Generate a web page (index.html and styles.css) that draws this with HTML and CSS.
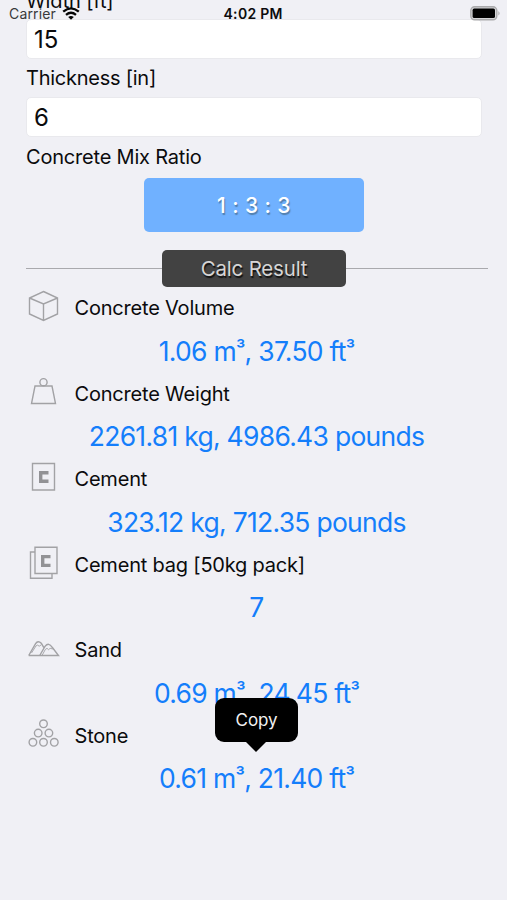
FILE: index.html
```html
<!DOCTYPE html>
<html lang="en">
<head>
<meta charset="utf-8">
<title>Concrete Calculator</title>
<link rel="stylesheet" href="styles.css">
</head>
<body>
<header class="status">
  <div class="network"><span class="carrier">Carrier</span>
    <svg class="wifi" width="18" height="13" viewBox="0 0 18 13" fill="none" stroke="#050505" stroke-width="2.3"><path d="M1.2 4.7Q9-2 16.8 4.7M4 7.8Q9 3.8 14 7.8"/><path d="M6.2 9.9Q9 7.9 11.8 9.9L9 12.8Z" fill="#050505" stroke="none"/></svg>
  </div>
  <span class="time">4:02 PM</span>
  <svg class="battery" width="31" height="15" viewBox="0 0 31 15"><rect x=".8" y=".8" width="26" height="13" rx="3.8" fill="#d5d5d7" stroke="#aaaaac" stroke-width="1.4"/><rect x="2.6" y="2.6" width="22.4" height="9.4" rx="1.6" fill="#000"/><path d="M28.4 5Q30.8 7.3 28.4 9.6Z" fill="#aaaaac"/></svg>
</header>
<main class="page">
  <label class="field-label first">Width [ft]</label>
  <div class="field">15</div>
  <label class="field-label">Thickness [in]</label>
  <div class="field">6</div>
  <label class="field-label ratio-label">Concrete Mix Ratio</label>
  <button class="ratio">1 : 3 : 3</button>
  <div class="divider"><span class="divider-title">Calc Result</span></div>
  <section class="results">
    <div class="row"><svg class="icon" viewBox="0 0 34 34"><path d="M17 2.5 31 9v16L17 31.5 3 25V9ZM3 9l14 6 14-6M17 15v16.5"/></svg><span class="name">Concrete Volume</span></div>
    <div class="value volume">1.06 m<span class="cube">³</span>, 37.50 ft<span class="cube">³</span></div>
    <div class="row"><svg class="icon" viewBox="0 0 34 34"><circle cx="17" cy="7.2" r="3.6"/><path d="M8.5 11h17L29 28.5H5Z"/></svg><span class="name">Concrete Weight</span></div>
    <div class="value">2261.81 kg, 4986.43 pounds</div>
    <div class="row"><svg class="icon" viewBox="0 0 34 34"><path d="M6 3.5h22V30H6Z"/><path class="mark" d="M22 12.8h-7.8v8.4H22"/></svg><span class="name">Cement</span></div>
    <div class="value">323.12 kg, 712.35 pounds</div>
    <div class="row"><svg class="icon" viewBox="0 0 34 34"><path d="M8.5 1.2h22v26.3h-22ZM8.5 6H4v26.3h21.5v-4.8"/><path class="mark" d="M24 10.6h-7.8v8.8H24"/></svg><span class="name">Cement bag [50kg pack]</span></div>
    <div class="value">7</div>
    <div class="row"><svg class="icon" viewBox="0 0 34 34"><path d="M2.2 24.5 9.1 12.7Q11.5 9.1 14.8 12.3L17.2 16.4M2.2 24.5H32L25.7 16.3Q22.2 10.8 18.5 15.4L13.2 24.5"/><path class="grain" d="M15.5 24.5l3.3-6 1.7-1.2 1.6 1.4 1.5-1.4 2.7.7M5 22l4.5-7.1 1.6-.8 1.6 1.1 1.8-1.2"/></svg><span class="name">Sand</span></div>
    <div class="value volume">0.69 m<span class="cube">³</span>, 24.45 ft<span class="cube">³</span></div>
    <div class="row"><svg class="icon" viewBox="0 0 34 34"><circle cx="17" cy="6.8" r="3.8"/><circle cx="11.7" cy="16.1" r="3.8"/><circle cx="22.4" cy="16.1" r="3.8"/><circle cx="6.4" cy="25.3" r="3.8"/><circle cx="17" cy="25.3" r="3.8"/><circle cx="27.8" cy="25.3" r="3.8"/></svg><span class="name">Stone</span></div>
    <div class="value volume">0.61 m<span class="cube">³</span>, 21.40 ft<span class="cube">³</span><span class="tooltip">Copy</span></div>
  </section>
</main>
</body>
</html>
```
FILE: styles.css
```css
* { box-sizing: border-box; }
body {
  margin: 0;
  height: 900px;
  overflow: hidden;
  background: #f0f0f5;
  color: #0b0b0d;
  font-family: Inter, "Liberation Sans", sans-serif;
}
.status {
  position: absolute;
  inset: 0 0 auto;
  height: 27px;
  padding: 0 6px 0 9px;
  display: grid;
  grid-template-columns: 1fr 60px 1fr;
  align-items: center;
  z-index: 2;
  font-size: 14px;
}
.network { display: flex; align-items: center; gap: 6px; }
.carrier { color: #39393b; letter-spacing: .15px; }
.time { margin-left: -1.5px; font-size: 14px; font-weight: 600; letter-spacing: .3px; white-space: nowrap; }
.battery { justify-self: end; }
.page { padding: 0 25px 0 26px; }
.field-label {
  display: flex;
  align-items: center;
  height: 37.5px;
  font-size: 20px;
  letter-spacing: -.25px;
  white-space: nowrap;
}
.field-label.first { height: 39px; margin-top: -20.5px; padding-top: 4px; letter-spacing: -.15px; }
.field {
  height: 40.5px;
  width: 456px;
  padding-left: 7px;
  border: 1px solid #e9e9ed;
  border-radius: 5px;
  background: #fff;
  font-size: 24px;
  line-height: 39px;
}
.field-label:not(.first):not(.ratio-label) { padding-top: 1px; }
.ratio-label { height: 41px; padding-bottom: 1px; letter-spacing: -.2px; }
.ratio {
  display: block;
  width: 220px;
  height: 53.5px;
  margin: 0 0 0 118px;
  padding: 1px 0 0;
  border: 0;
  border-radius: 5px;
  background: #70b1ff;
  color: #fff;
  font: 500 21px Inter, sans-serif;
  letter-spacing: .4px;
  text-shadow: 1px 2px 1px #527fad;
}
.divider {
  display: flex;
  align-items: center;
  width: 462px;
  height: 37px;
  margin-top: 18.5px;
}
.divider::before, .divider::after { content: ""; height: 1px; background: #a9a9ad; }
.divider::before { width: 136px; }
.divider::after { flex: 1; }
.divider-title {
  width: 184px;
  height: 37px;
  border-radius: 5px;
  background: #424242;
  color: #d6d6d6;
  font-size: 20.5px;
  line-height: 37px;
  letter-spacing: -.2px;
  text-align: center;
  text-shadow: 1px 2px 1px #111;
}
.results { margin-right: -7px; }
.row { display: flex; align-items: center; height: 42.5px; font-size: 20px; }
.icon {
  width: 34px;
  height: 34px;
  margin: -4px 14.5px 0 0;
  transform: translateX(.5px);
  fill: none;
  stroke: #a2a2a5;
  stroke-width: 1.4;
}
.mark { stroke: #929295; stroke-width: 3.4; }
.grain { stroke-width: .9; }
.name { letter-spacing: -.2px; }
.value {
  position: relative;
  width: 461px;
  height: 43px;
  color: #147efb;
  font-size: 26.5px;
  line-height: 43px;
  text-align: center;
  letter-spacing: -.72px;
}
.cube {
  font-size: 20.5px;
  font-weight: 500;
  line-height: 1;
  vertical-align: 4.5px;
}
.tooltip {
  position: absolute;
  left: 189px;
  top: -59px;
  width: 83px;
  height: 44px;
  border-radius: 9px;
  background: #000;
  color: #f2f2f2;
  font-size: 17px;
  line-height: 44px;
  letter-spacing: -.1px;
}
.tooltip::after {
  content: "";
  position: absolute;
  left: 30px;
  top: 43px;
  border: 11px solid transparent;
  border-top-color: #000;
  border-bottom: 0;
}
```
